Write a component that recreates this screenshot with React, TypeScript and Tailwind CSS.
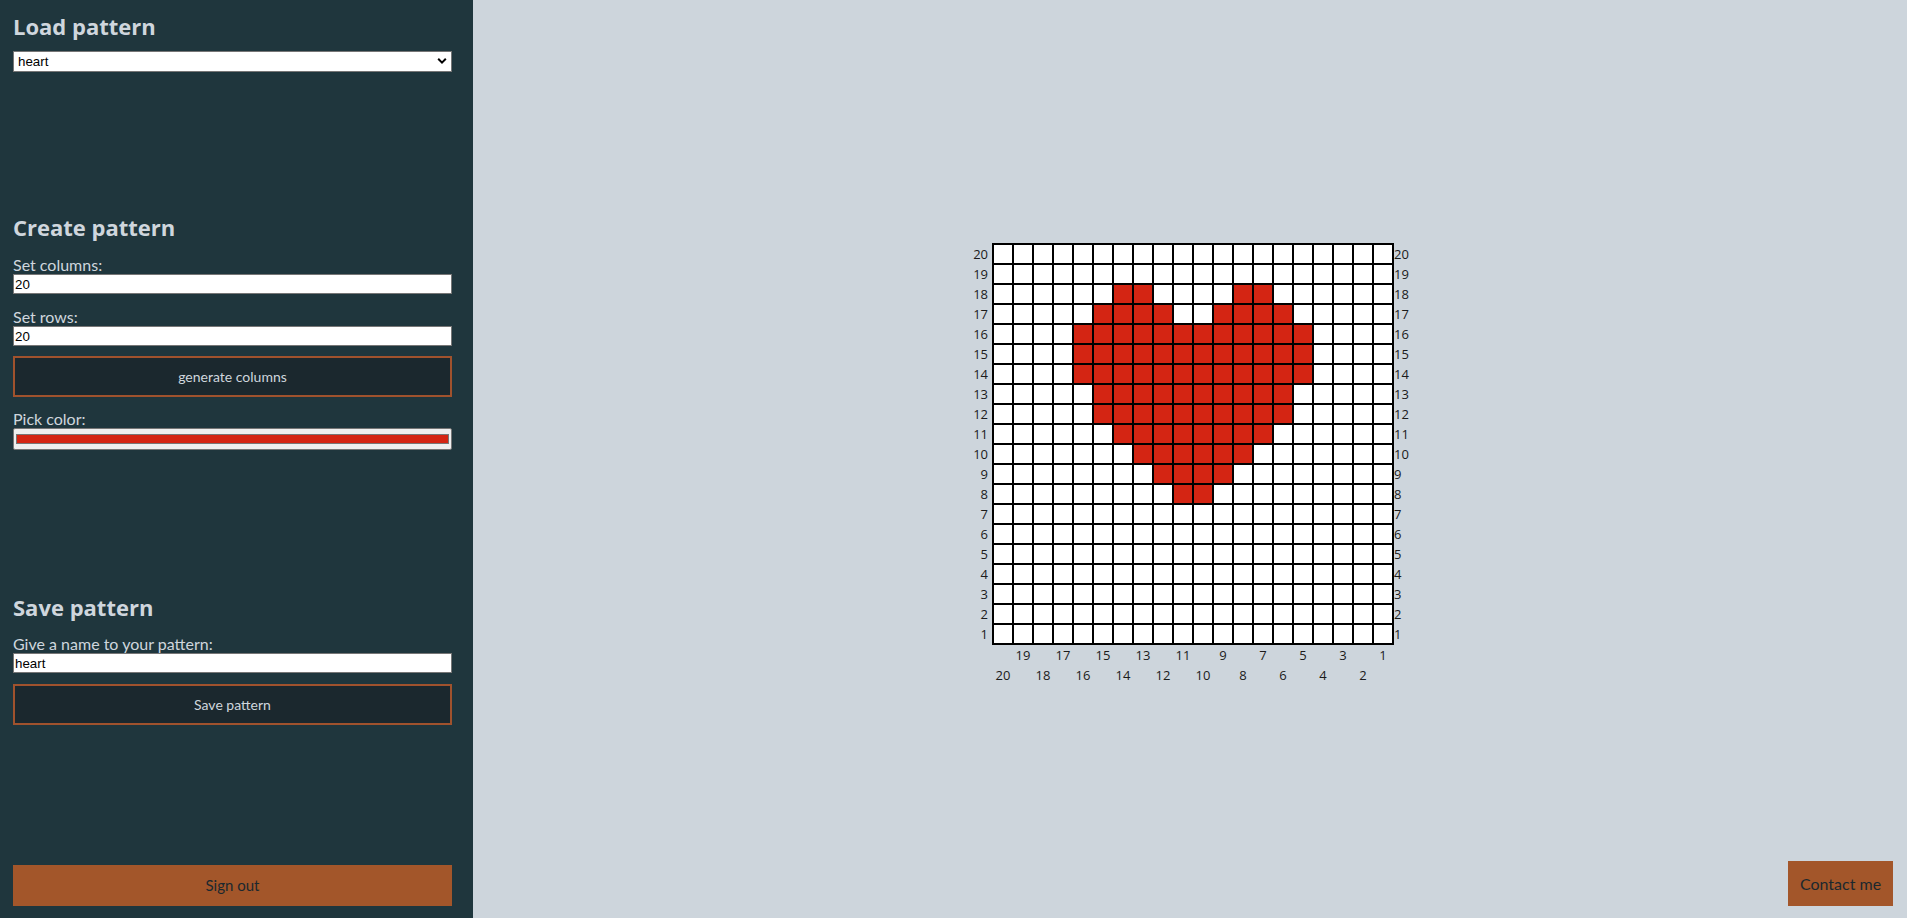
import React from "react";

const RED = "#d42513";

const heartRows: Record<number, number[]> = {
  18: [6, 7, 12, 13],
  17: [5, 6, 7, 8, 11, 12, 13, 14],
  16: [4, 5, 6, 7, 8, 9, 10, 11, 12, 13, 14, 15],
  15: [4, 5, 6, 7, 8, 9, 10, 11, 12, 13, 14, 15],
  14: [4, 5, 6, 7, 8, 9, 10, 11, 12, 13, 14, 15],
  13: [5, 6, 7, 8, 9, 10, 11, 12, 13, 14],
  12: [5, 6, 7, 8, 9, 10, 11, 12, 13, 14],
  11: [6, 7, 8, 9, 10, 11, 12, 13],
  10: [7, 8, 9, 10, 11, 12],
  9: [8, 9, 10, 11],
  8: [9, 10],
};

const rows = Array.from({ length: 20 }, (_, i) => 20 - i);
const cols = Array.from({ length: 20 }, (_, i) => i);

const font = { fontFamily: "Lato, 'Open Sans', sans-serif" };
const headFont = { fontFamily: "'Open Sans', Lato, sans-serif" };

function Heading({ children, mt }: { children: React.ReactNode; mt: string }) {
  return (
    <h2 className={`${mt} text-[22px] leading-[32px] font-bold text-[#cfd6dd]`} style={headFont}>
      {children}
    </h2>
  );
}

function Label({ children, mt }: { children: React.ReactNode; mt: string }) {
  return (
    <div className={`${mt} text-[16px] leading-[19px] text-[#cfd6dd]`} style={font}>
      {children}
    </div>
  );
}

function TextInput({ value }: { value: string }) {
  return (
    <input
      readOnly
      value={value}
      className="block w-[439px] h-[20px] bg-white border border-[#767676] px-[1px] text-[13.33px] text-black outline-none"
      style={{ fontFamily: "'Liberation Sans', Arial, sans-serif" }}
    />
  );
}

function DarkButton({ children, mt }: { children: React.ReactNode; mt: string }) {
  return (
    <button
      className={`${mt} block w-[439px] h-[41px] bg-[#1b282e] border-2 border-[#a0522d] text-[14px] text-[#cfd6dd]`}
      style={font}
    >
      {children}
    </button>
  );
}

export default function App() {
  return (
    <div className="flex w-full h-[918px] bg-[#cdd5dc] overflow-hidden relative">
      <aside className="w-[473px] h-[918px] shrink-0 bg-[#1f363d] flex flex-col pl-[13px] pt-[10px] pb-[12px]">
        <Heading mt="mt-0">Load pattern</Heading>
        <div className="relative mt-[9px] w-[439px] h-[21px]">
          <select
            className="appearance-none block w-full h-full bg-white border border-[#767676] pl-[4px] text-[13.33px] text-black outline-none"
            style={{ fontFamily: "'Liberation Sans', Arial, sans-serif" }}
            defaultValue="heart"
          >
            <option value="heart">heart</option>
          </select>
          <svg
            className="absolute right-[5px] top-[6px] pointer-events-none"
            width="10"
            height="8"
            viewBox="0 0 10 8"
          >
            <path d="M1.2 1.8 L5 5.6 L8.8 1.8" fill="none" stroke="#000" strokeWidth="2" />
          </svg>
        </div>

        <Heading mt="mt-[139px]">Create pattern</Heading>
        <Label mt="mt-[12px]">Set columns:</Label>
        <TextInput value="20" />
        <Label mt="mt-[13px]">Set rows:</Label>
        <TextInput value="20" />
        <DarkButton mt="mt-[10px]">generate columns</DarkButton>
        <Label mt="mt-[12px]">Pick color:</Label>
        <div className="w-[439px] h-[22px] bg-[#efefef] border border-[#767676] rounded-[2px] px-[2px] py-[5px]">
          <div className="w-full h-full border border-[#777777]" style={{ backgroundColor: RED }} />
        </div>

        <Heading mt="mt-[141px]">Save pattern</Heading>
        <Label mt="mt-[11px]">Give a name to your pattern:</Label>
        <TextInput value="heart" />
        <DarkButton mt="mt-[11px]">Save pattern</DarkButton>

        <button
          className="mt-auto block w-[439px] h-[41px] bg-[#a3562a] text-[15px] text-[#1b282e]"
          style={font}
        >
          Sign out
        </button>
      </aside>

      <main className="flex-1 flex items-center justify-center pt-[10px]">
        <div className="flex flex-col" style={{ fontFamily: "'Open Sans', Lato, sans-serif" }}>
          <div className="flex">
            <div className="w-[24px] pt-[1px] flex flex-col">
              {rows.map((r) => (
                <div key={r} className="h-[20px] leading-[20px] text-[13px] text-right pr-[4px] text-[#1b1b1b]">
                  {r}
                </div>
              ))}
            </div>
            <div className="grid grid-cols-[repeat(20,20px)] border border-black">
              {rows.map((r) =>
                cols.map((c) => {
                  const filled = heartRows[r]?.includes(c);
                  return (
                    <div
                      key={`${r}-${c}`}
                      className="w-[20px] h-[20px] border border-black"
                      style={{ backgroundColor: filled ? RED : "#ffffff" }}
                    />
                  );
                })
              )}
            </div>
            <div className="w-[18px] pt-[1px] flex flex-col">
              {rows.map((r) => (
                <div key={r} className="h-[20px] leading-[20px] text-[13px] text-left text-[#1b1b1b]">
                  {r}
                </div>
              ))}
            </div>
          </div>
          <div className="flex pl-[25px]">
            {cols.map((c) => (
              <div key={c} className="w-[20px] h-[20px] leading-[20px] text-[13px] text-center text-[#1b1b1b]">
                {c % 2 === 1 ? 20 - c : ""}
              </div>
            ))}
          </div>
          <div className="flex pl-[25px]">
            {cols.map((c) => (
              <div key={c} className="w-[20px] h-[20px] leading-[20px] text-[13px] text-center text-[#1b1b1b]">
                {c % 2 === 0 ? 20 - c : ""}
              </div>
            ))}
          </div>
        </div>
      </main>

      <button
        className="absolute right-[14px] bottom-[12px] w-[105px] h-[45px] bg-[#a3562a] text-[16px] text-[#1b282e]"
        style={font}
      >
        Contact me
      </button>
    </div>
  );
}
